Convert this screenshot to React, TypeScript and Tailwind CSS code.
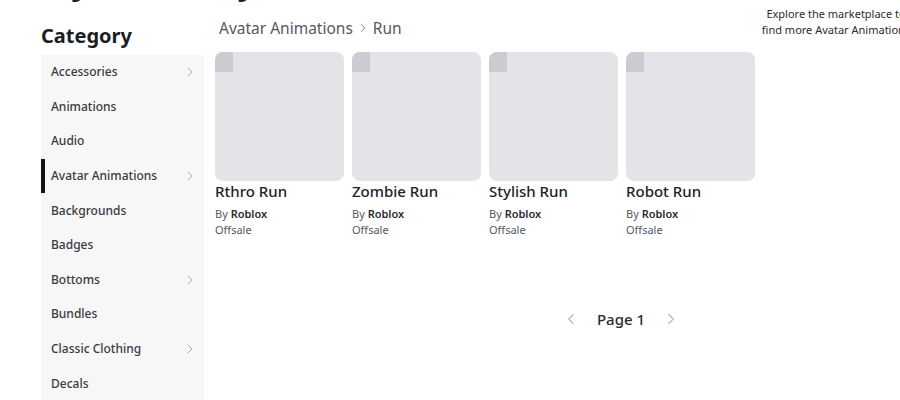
import React from 'react';
import { ChevronRight, ChevronLeft } from 'lucide-react';

const categories = [
  { name: 'Accessories', sub: true },
  { name: 'Animations', sub: false },
  { name: 'Audio', sub: false },
  { name: 'Avatar Animations', sub: true, active: true },
  { name: 'Backgrounds', sub: false },
  { name: 'Badges', sub: false },
  { name: 'Bottoms', sub: true },
  { name: 'Bundles', sub: false },
  { name: 'Classic Clothing', sub: true },
  { name: 'Decals', sub: false },
];

const items = ['Rthro Run', 'Zombie Run', 'Stylish Run', 'Robot Run'];

function ItemCard({ name }: { name: string }) {
  return (
    <div className="w-[128.5px]">
      <div className="relative h-[129px] w-[128.5px] overflow-hidden rounded-lg bg-[#e3e4e8]">
        {/* placeholder for the limited/owned marker */}
        <div className="absolute left-0 top-0 h-[20px] w-[18px] bg-[#cbccd2]" />
      </div>
      <div className="text-[15px] font-medium leading-5 text-[#202226]">{name}</div>
      <div className="mt-[5px] text-[11px] leading-4 text-[#55585f]">
        By <span className="font-semibold text-[#2a2c31]">Roblox</span>
      </div>
      <div className="text-[11px] leading-4 text-[#55585f]">Offsale</div>
    </div>
  );
}

export default function App() {
  return (
    <div
      className="h-[400px] w-screen overflow-hidden bg-white"
      style={{ fontFamily: '"Noto Sans", "Open Sans", sans-serif' }}
    >
      <div className="pl-[41px]">
        <h1 className="-mt-[37px] h-[42px] text-[32px] font-bold leading-[37px] text-[#1b1e24]">My Inventory</h1>
        <div className="flex gap-[11px]">
          {/* Sidebar */}
          <div className="w-[163px] shrink-0">
            <h2 className="mt-[16px] text-[20px] font-bold leading-[30px] text-[#1b1e24]">Category</h2>
            <ul className="mt-[4px] bg-[#f7f7f8]">
              {categories.map((c) => (
                <li
                  key={c.name}
                  className={
                    c.active
                      ? 'flex h-[34.6px] items-center justify-between border-l-4 border-[#111214] pl-[6px] pr-[6px] text-[12px] font-medium text-[#393b40]'
                      : 'flex h-[34.6px] items-center justify-between pl-[10px] pr-[6px] text-[12px] font-medium text-[#393b40]'
                  }
                >
                  <span>{c.name}</span>
                  {c.sub && <ChevronRight className="h-4 w-4 text-[#9a9ca2]" strokeWidth={1.25} />}
                </li>
              ))}
            </ul>
          </div>

          {/* Main */}
          <div className="w-[530px] shrink-0">
            <div className="mt-[11px] flex items-center gap-[3px] pl-[4px] text-[15.5px] leading-6 text-[#55585f]">
              <span>Avatar Animations</span>
              <ChevronRight className="h-[14px] w-[14px] text-[#6b6e75]" strokeWidth={1.5} />
              <span>Run</span>
            </div>
            <div className="mt-[12px] flex gap-[8.5px]">
              {items.map((n) => (
                <ItemCard key={n} name={n} />
              ))}
            </div>
            <div className="ml-[282px] mt-[70px] flex items-center justify-center gap-[17px]">
              <ChevronLeft className="h-[18px] w-[18px] text-[#b4b6bb]" strokeWidth={1.5} />
              <span className="text-[15px] font-medium text-[#2a2c31]">Page 1</span>
              <ChevronRight className="h-[18px] w-[18px] text-[#b4b6bb]" strokeWidth={1.5} />
            </div>
          </div>

          {/* Right panel */}
          <div className="w-[160px] shrink-0">
            <p className="mt-[1px] text-center text-[11px] leading-4 text-[#2a2c31]">
              Explore the marketplace to find more Avatar Animations
            </p>
          </div>
        </div>
      </div>
    </div>
  );
}
